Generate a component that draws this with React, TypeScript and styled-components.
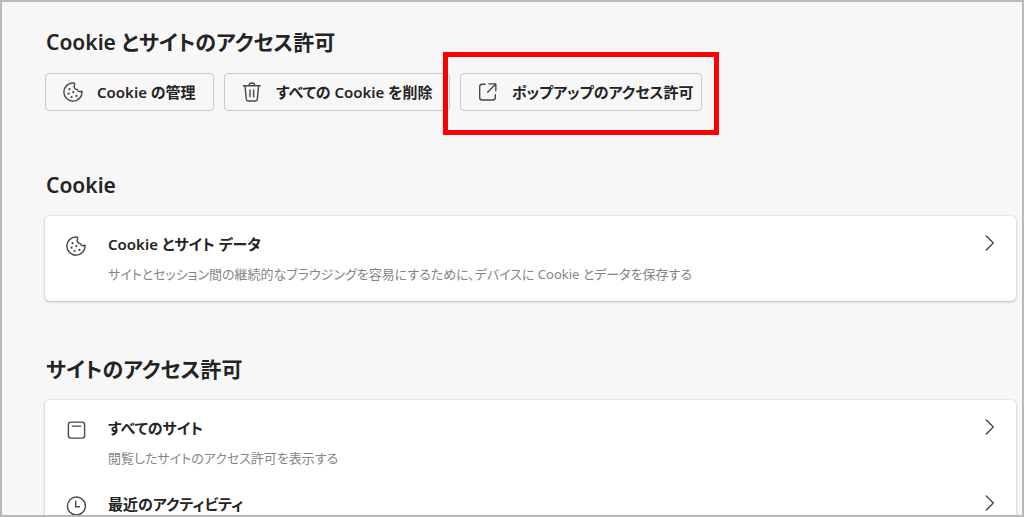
import React from 'react';
import styled, { createGlobalStyle } from 'styled-components';

const GlobalStyle = createGlobalStyle`
  *, *::before, *::after { box-sizing: border-box; }
  body {
    margin: 0;
    background: #f7f7f7;
    color: #242424;
    font-family: "Noto Sans", "Noto Sans CJK JP", sans-serif;
    font-feature-settings: "palt";
  }
`;

const Page = styled.main`
  height: 100vh;
  overflow: hidden;
  padding: 24px 6px 0 43px;
  border: 2px solid #b9b9b9;
  background: #f7f7f7;
`;

const Section = styled.section<{ $gap?: number }>`
  margin-top: ${(p) => p.$gap ?? 0}px;
`;

const Heading = styled.h2`
  margin: 0 0 15px;
  padding-left: 1px;
  font-size: 21px;
  line-height: 32px;
  font-weight: 600;
  white-space: nowrap;
`;

const Toolbar = styled.div`
  display: flex;
  gap: 10px;
`;

const ToolButton = styled.button<{ $width: number }>`
  position: relative;
  display: flex;
  flex: none;
  align-items: center;
  gap: 14px;
  width: ${(p) => p.$width}px;
  height: 38px;
  padding: 0 0 0 17px;
  border: 1px solid #c8c8c8;
  border-radius: 4px;
  background: transparent;
  color: inherit;
  font: inherit;
  font-feature-settings: inherit;
  font-size: 15px;
  line-height: 24px;
  font-weight: 600;
  white-space: nowrap;
`;

const Highlight = styled.span`
  position: absolute;
  inset: -22px -18px -25px;
  border: 5px solid #ff0000;
  pointer-events: none;
`;

const Card = styled.div`
  display: flex;
  flex-direction: column;
  gap: 24px;
  padding: 16px 16px 17px 21px;
  border-radius: 5px;
  background: #ffffff;
  box-shadow: 0 1px 3px rgba(0, 0, 0, 0.22), 0 0 2px rgba(0, 0, 0, 0.12);
`;

const Row = styled.a`
  display: flex;
  align-items: flex-start;
  color: inherit;
  text-decoration: none;
`;

const RowIcon = styled.span`
  display: flex;
  margin: 4px 22px 0 0;
`;

const RowText = styled.span`
  display: flex;
  flex: 1;
  flex-direction: column;
  gap: 8px;
  white-space: nowrap;
`;

const RowTitle = styled.span`
  font-size: 15px;
  line-height: 24px;
  font-weight: 600;
`;

const RowNote = styled.span`
  min-height: 20px;
  color: #858585;
  font-size: 13px;
  line-height: 20px;
`;

const RowArrow = styled.span`
  display: flex;
  margin-top: 2px;
`;

const Icon = styled.svg`
  display: block;
  flex: none;
  width: 20px;
  height: 20px;
  fill: none;
  stroke: #484848;
  stroke-width: 1.4;
  stroke-linecap: round;
  stroke-linejoin: round;
`;

const Cookie = () => (
  <Icon viewBox="0 0 20 20" aria-hidden="true">
    <path d="M10.6 1A9.1 9.1 0 1 0 19 9.2C17.6 10.1 14.9 9.9 14.5 7.6C12.2 7.8 10 5.4 11.7 2.3C11.9 1.7 11.4 1 10.6 1Z" />
    <g fill="#484848" stroke="none">
      <circle cx="6.5" cy="7.2" r="1.1" />
      <circle cx="10.3" cy="10.2" r="1.1" />
      <circle cx="5.6" cy="11.7" r="1.1" />
      <circle cx="8.6" cy="15" r="1.1" />
      <circle cx="13.4" cy="13.9" r="1.1" />
    </g>
  </Icon>
);

const Trash = () => (
  <Icon viewBox="0 0 20 20" aria-hidden="true">
    <path d="M1.4 3.7H18.2M7 3.6C7 .1 12.6 .1 12.6 3.6M3 3.8L4.3 17.3Q4.5 19 6.2 19H13.4Q15.1 19 15.3 17.3L16.6 3.8M8 8V14.8M11.6 8V14.8" />
  </Icon>
);

const OpenWindow = () => (
  <Icon viewBox="0 0 20 20" aria-hidden="true">
    <path d="M7 2.2H4.2Q1.7 2.2 1.7 4.7V15.5Q1.7 18 4.2 18H14.8Q17.3 18 17.3 15.5V12.6M10.8 1.9H17.8V8.7M17.5 2.2L9.7 10.3" />
  </Icon>
);

const Site = () => (
  <Icon viewBox="0 0 20 20" aria-hidden="true">
    <rect x="2.4" y="2.1" width="16.2" height="16" rx="2.6" />
    <path d="M6.2 6.1H14.8" />
  </Icon>
);

const Clock = () => (
  <Icon viewBox="0 0 20 20" aria-hidden="true">
    <circle cx="10.4" cy="10" r="9" />
    <path d="M9.7 5.2V10.7H13.4" />
  </Icon>
);

const Chevron = () => (
  <Icon viewBox="0 0 20 20" aria-hidden="true">
    <path d="M6.3 2L13.3 9L6.3 16" />
  </Icon>
);

interface SettingProps {
  icon: React.ReactNode;
  title: string;
  note?: string;
}

const Setting = ({ icon, title, note }: SettingProps) => (
  <Row href="#">
    <RowIcon>{icon}</RowIcon>
    <RowText>
      <RowTitle>{title}</RowTitle>
      <RowNote>{note}</RowNote>
    </RowText>
    <RowArrow>
      <Chevron />
    </RowArrow>
  </Row>
);

export default function App() {
  return (
    <>
      <GlobalStyle />
      <Page lang="ja">
        <Section>
          <Heading>Cookie とサイトのアクセス許可</Heading>
          <Toolbar>
            <ToolButton type="button" $width={169}>
              <Cookie />
              Cookie の管理
            </ToolButton>
            <ToolButton type="button" $width={226}>
              <Trash />
              すべての Cookie を削除
            </ToolButton>
            <ToolButton type="button" $width={242}>
              <OpenWindow />
              ポップアップのアクセス許可
              <Highlight />
            </ToolButton>
          </Toolbar>
        </Section>
        <Section $gap={58}>
          <Heading>Cookie</Heading>
          <Card>
            <Setting
              icon={<Cookie />}
              title="Cookie とサイト データ"
              note="サイトとセッション間の継続的なブラウジングを容易にするために、デバイスに Cookie とデータを保存する"
            />
          </Card>
        </Section>
        <Section $gap={52}>
          <Heading>サイトのアクセス許可</Heading>
          <Card>
            <Setting
              icon={<Site />}
              title="すべてのサイト"
              note="閲覧したサイトのアクセス許可を表示する"
            />
            <Setting icon={<Clock />} title="最近のアクティビティ" />
          </Card>
        </Section>
      </Page>
    </>
  );
}
